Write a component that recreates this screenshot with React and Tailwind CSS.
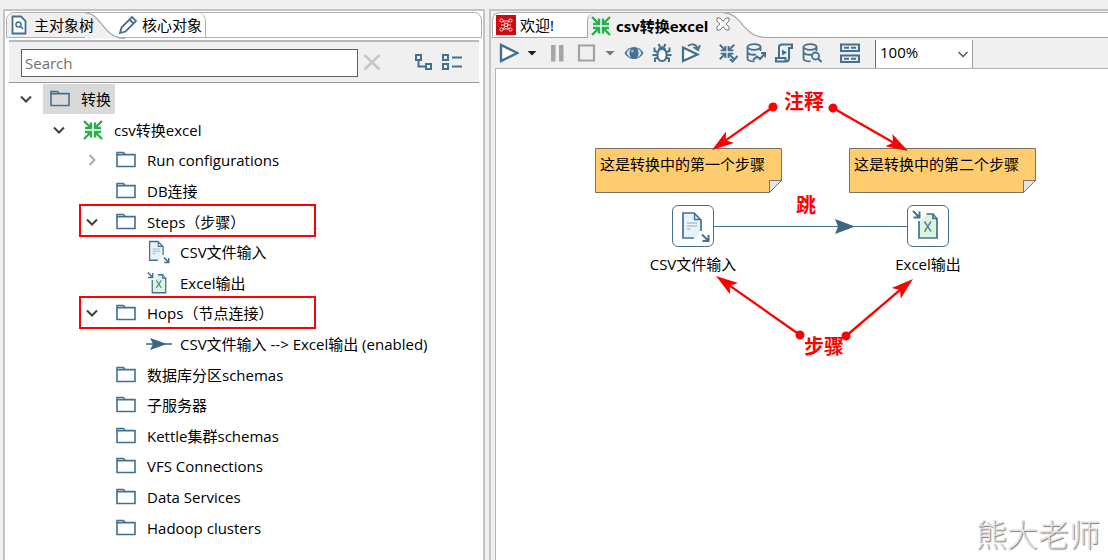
import React from "react";

const INK = "#44708f";

function Svg({ children, className = "size-5", box = "0 0 20 20" }) {
  return (
    <svg viewBox={box} className={`shrink-0 ${className}`} fill="none" aria-hidden="true">
      {children}
    </svg>
  );
}

const FolderIcon = () => (
  <Svg>
    <path d="M1 4.5V2.5H7.5L9 4.5" stroke={INK} strokeWidth="1.5" />
    <path d="M1 4.6H19V16.5H1Z" stroke={INK} strokeWidth="1.6" />
  </Svg>
);

const InwardArrows = ({ color = "#27b04c" }) => (
  <g stroke={color} strokeWidth="2.4">
    <path d="M1 1L8 8M8 2.500V8H2" />
    <path d="M19 1L12 8M12 2.500V8H18" />
    <path d="M1 19L8 12M8 17.500V12H2" />
    <path d="M19 19L12 12M12 17.500V12H18" />
  </g>
);

const TransIcon = () => (
  <Svg>
    <InwardArrows />
  </Svg>
);

const CsvShape = () => (
  <>
    <path d="M7 5H18L24 11V25L20 29H7Z" fill="#e8f2f9" />
    <path d="M18 30H7V5H18L25 12V23" stroke={INK} strokeWidth="1.700" />
    <path d="M18.500 5V11.500H25" stroke={INK} strokeWidth="1.400" />
    <path d="M11 15H21M11 18H21M11 21H14.500" stroke="#92abc0" strokeWidth="1.100" />
    <path d="M26 26.500L32 32.500M32.500 27V33H26.500" stroke={INK} strokeWidth="2" />
  </>
);

const ExcelShape = () => (
  <>
    <path d="M8 14L16 6H22L26 10V29H8Z" fill="#dcf3dc" />
    <path d="M8 13V30H26V10.500H22V6H15.500" stroke={INK} strokeWidth="1.700" />
    <path d="M22 6L26 10.500" stroke={INK} strokeWidth="1.200" />
    <path d="M13.500 13.500L20 23.500M20 13.500L13.500 23.500" stroke="#5d8299" strokeWidth="1.500" />
    <path d="M2 3L8 9M8.500 3.500V9.500H2.500" stroke={INK} strokeWidth="2" />
  </>
);

const CsvIcon = () => (
  <Svg box="4 3 31 32" className="size-6">
    <CsvShape />
  </Svg>
);
const ExcelIcon = () => (
  <Svg box="2 1 30 32" className="size-6">
    <ExcelShape />
  </Svg>
);
const HopIcon = () => (
  <Svg box="0 0 26 14" className="h-3.5 w-6.5">
    <path d="M0 7H26" stroke={INK} strokeWidth="1.6" />
    <path d="M4 1L21 7L4 13L7 7Z" fill="#3d6685" />
  </Svg>
);

const Chevron = ({ open }) => (
  <Svg className="size-3" box="0 0 12 12">
    {open ? (
      <path d="M1 3.500L6 8.500L11 3.500" stroke="#404040" strokeWidth="2" />
    ) : (
      <path d="M3.500 1L8.500 6L3.500 11" stroke="#a6a6a6" strokeWidth="1.800" />
    )}
  </Svg>
);

const TREE = [
  { level: 0, text: "转换", icon: FolderIcon, open: true, selected: true },
  { level: 1, text: "csv转换excel", icon: TransIcon, open: true },
  { level: 2, text: "Run configurations", icon: FolderIcon, open: false },
  { level: 2, text: "DB连接", icon: FolderIcon },
  { level: 2, text: "Steps（步骤）", icon: FolderIcon, open: true, marked: true },
  { level: 3, text: "CSV文件输入", icon: CsvIcon },
  { level: 3, text: "Excel输出", icon: ExcelIcon },
  { level: 2, text: "Hops（节点连接）", icon: FolderIcon, open: true, marked: true },
  { level: 3, text: "CSV文件输入 --> Excel输出 (enabled)", icon: HopIcon },
  { level: 2, text: "数据库分区schemas", icon: FolderIcon },
  { level: 2, text: "子服务器", icon: FolderIcon },
  { level: 2, text: "Kettle集群schemas", icon: FolderIcon },
  { level: 2, text: "VFS Connections", icon: FolderIcon },
  { level: 2, text: "Data Services", icon: FolderIcon },
  { level: 2, text: "Hadoop clusters", icon: FolderIcon },
];

const INDENT = ["pl-[7px]", "pl-[40px]", "pl-[73px]", "pl-[106px]"];

function TreeRow({ level, text, icon: Icon, open, selected, marked }) {
  return (
    <li
      role="treeitem"
      aria-level={level + 1}
      aria-expanded={open}
      aria-selected={!!selected}
      className={`relative flex items-center gap-[7px] ${INDENT[level]}`}
    >
      {open === undefined ? (
        <span className="w-5 shrink-0" />
      ) : (
        <button type="button" aria-label={`切换 ${text}`} className="flex w-5 shrink-0 justify-center">
          <Chevron open={open} />
        </button>
      )}
      <span
        className={`flex h-[30px] items-center gap-[11px] whitespace-nowrap pl-[7px] pr-1 ${
          selected ? "bg-[#d9d9d9]" : ""
        }`}
      >
        <span className="flex w-5 shrink-0 justify-center">
          <Icon />
        </span>
        {text}
      </span>
      {marked && (
        <span className="pointer-events-none absolute -top-0.5 bottom-0 left-[70px] w-[237px] border-2 border-[#fb0007]" />
      )}
    </li>
  );
}

function Explorer() {
  return (
    <section className="flex min-w-0 flex-col border-x-2 border-t-2 border-[#c3c3c8] bg-white px-px pt-px">
      <div role="tablist" className="flex h-[26px] shrink-0 rounded-t-lg border border-[#b0b0b0] bg-white">
        <button
          type="button"
          role="tab"
          aria-selected="true"
          className="relative flex w-[78px] items-center gap-[7px] whitespace-nowrap rounded-tl-lg bg-[#f0f0f0] pl-1"
        >
          <Svg className="h-[26px] w-10 absolute left-[78px] top-0" box="0 0 40 26">
            <path d="M0 0C17 0 17 25 40 25.500H0Z" fill="#f0f0f0" />
            <path d="M0 0C17 0 17 25 40 25.500" stroke="#a5a5a5" strokeWidth="1.200" />
          </Svg>
          <Svg className="relative h-5 w-4" box="0 0 16 20">
            <path d="M1.500 1.500H10L14.500 6V18.500H1.500Z" stroke={INK} strokeWidth="1.800" fill="#fff" />
            <circle cx="7.500" cy="9.500" r="2.500" stroke={INK} strokeWidth="1.500" />
            <path d="M9.500 11.500L12 14" stroke={INK} strokeWidth="1.600" />
          </Svg>
          <span className="relative">主对象树</span>
        </button>
        <button
          type="button"
          role="tab"
          aria-selected="false"
          className="relative ml-[33px] flex items-center gap-1 whitespace-nowrap rounded-tr-lg border-r border-[#b0b0b0] pr-[3px]"
        >
          <Svg>
            <path d="M2 18L3.500 12.500L14 2L18 6L7.500 16.500ZM11.500 4.500L15.500 8.500" stroke={INK} strokeWidth="1.800" />
          </Svg>
          核心对象
        </button>
      </div>

      <div className="mx-[3px] mt-0.5 flex min-h-0 flex-1 flex-col border-t-2 border-[#b9b9bd]">
        <div className="flex h-[41px] shrink-0 items-center border-b border-[#999] bg-[#f0f0f0] pl-3 pr-[17px]">
          <input
            type="text"
            placeholder="Search"
            aria-label="Search"
            className="mt-px h-7 min-w-0 flex-1 border border-[#5f5f5f] bg-white px-[3px] outline-none placeholder:text-[#707070]"
          />
          <button type="button" aria-label="清除" className="ml-1">
            <Svg>
              <path d="M2.500 3L17.500 17.500M17.500 3L2.500 17.500" stroke="#c6c6c6" strokeWidth="2.500" />
            </Svg>
          </button>
          <button type="button" aria-label="展开全部" className="ml-8">
            <Svg>
              <path d="M2 3H7V8H2ZM12 12H17V17H12ZM4.500 8V14.500H12" stroke={INK} strokeWidth="2" />
            </Svg>
          </button>
          <button type="button" aria-label="折叠全部" className="ml-2">
            <Svg>
              <path d="M1 3H6V8H1ZM1 12H6V17H1Z" stroke={INK} strokeWidth="2" />
              <path d="M10 5.500H20M10 14.500H20" stroke={INK} strokeWidth="1.800" />
            </Svg>
          </button>
        </div>
        <ul role="tree" className="grid flex-1 auto-rows-fr pb-[17px] pt-px">
          {TREE.map((row) => (
            <TreeRow key={row.text + row.level} {...row} />
          ))}
        </ul>
      </div>
    </section>
  );
}

function Tool({ label, children, className = "", small }) {
  return (
    <button type="button" aria-label={label} title={label} className={`shrink-0 ${className}`}>
      <Svg className={small ? "h-5 w-2.5" : "size-5"} box={small ? "0 0 10 20" : "0 0 20 20"}>
        {children}
      </Svg>
    </button>
  );
}

const DbBody = () => (
  <>
    <ellipse cx="8" cy="4" rx="6.500" ry="2.800" stroke={INK} strokeWidth="1.800" />
    <path d="M1.500 4V15.500C1.500 17.200 4 18.400 8.500 18.400M14.500 4V8M1.500 9.500C2.500 11.500 6 12 10 11.600" stroke={INK} strokeWidth="1.800" />
  </>
);

function Toolbar() {
  return (
    <div role="toolbar" className="flex h-[30px] shrink-0 items-center bg-[#f0f0f0] pl-[7px]">
      <Tool label="运行">
        <path d="M2 2V18L18.500 10Z" stroke={INK} strokeWidth="2.400" fill="#fff" />
      </Tool>
      <Tool label="运行选项" small className="ml-2">
        <path d="M0.500 8H9.500L5 12.500Z" fill="#222" />
      </Tool>
      <Tool label="暂停" className="ml-2.5">
        <path d="M4 2H8.500V18.500H4ZM12 2H16.500V18.500H12Z" fill="#a6a6a6" />
      </Tool>
      <Tool label="停止" className="ml-2.5">
        <path d="M2 2.500H17V17.500H2Z" stroke="#a2a2a2" strokeWidth="2.200" />
      </Tool>
      <Tool label="停止选项" small className="ml-2">
        <path d="M0.500 8H9.500L5 12.500Z" fill="#777" />
      </Tool>
      <Tool label="预览" className="ml-[9px]">
        <path d="M0.500 10C5 2 15 2 19.500 10C15 18 5 18 0.500 10Z" fill={INK} />
        <path d="M2.500 10C4 7 5.500 6 7 5.500C5 8 5 12 7 14.500C5.500 14 4 13 2.500 10ZM17.500 10C16 7 14.500 6 13 5.500C15 8 15 12 13 14.500C14.500 14 16 13 17.500 10Z" fill="#d6e3ea" />
        <circle cx="8.500" cy="8" r="1.500" fill="#9bb4c5" />
      </Tool>
      <Tool label="调试" className="ml-2">
        <path d="M10 6C6.500 6 5.500 8 5.500 12C5.500 16 7.500 18 10 18C12.500 18 14.500 16 14.500 12C14.500 8 13.500 6 10 6Z" stroke={INK} strokeWidth="2" fill="#fff" />
        <path d="M6 7C6.500 2 13.500 2 14 7Z" fill={INK} />
        <path d="M6.500 1L8 4M13.500 1L12 4M5.500 9L2.500 8V4.500M14.500 9L17.500 8V4.500M5.500 12H0.500M14.500 12H19.500M6 14.500L3 15.500V19M14 14.500L17 15.500V19" stroke={INK} strokeWidth="2" />
      </Tool>
      <Tool label="重放" className="ml-[9px]">
        <path d="M2 4.500V18L16.500 11.500Z" stroke={INK} strokeWidth="2.200" fill="#fff" />
        <path d="M7 3C10 0.500 15 0.500 16.500 5.500M12.500 4L17 7L19 2" stroke={INK} strokeWidth="1.900" />
      </Tool>
      <Tool label="验证" className="ml-[17px]">
        <g transform="translate(1 1) scale(0.800)">
          <InwardArrows color={INK} />
        </g>
        <path d="M12 16L14.500 18.500L19.500 13" stroke={INK} strokeWidth="2" />
      </Tool>
      <Tool label="影响分析" className="ml-2">
        <DbBody />
        <path d="M7 17L11 13.500L14 16L19 10.500M15 10H19.500V14.500" stroke={INK} strokeWidth="2" />
      </Tool>
      <Tool label="获取SQL" className="ml-2">
        <path d="M5 15V4C5 2 6 1.500 8 1.500H18V5H15V15C15 17.500 14 18.500 12 18.500H2V15H11.500V18" stroke={INK} strokeWidth="2" />
        <path d="M8 6.500L13 9.500L8 12.500Z" fill={INK} />
      </Tool>
      <Tool label="探索数据库" className="ml-2">
        <DbBody />
        <circle cx="13.500" cy="13" r="3.500" stroke={INK} strokeWidth="1.800" fill="#f0f0f0" />
        <path d="M16 15.500L19.500 19" stroke={INK} strokeWidth="2" />
      </Tool>
      <Tool label="显示结果" className="ml-[18px]">
        <path d="M1 1.500H19V8H1ZM1 12.500H19V19H1Z" stroke={INK} strokeWidth="2.200" />
        <path d="M4 4.800H9M11 4.800H16M4 15.800H9M11 15.800H16" stroke={INK} strokeWidth="2" />
      </Tool>
      <div className="relative ml-[15px] h-full w-[98px] pt-0.5">
        <select
          aria-label="缩放"
          defaultValue="100%"
          className="h-full w-full appearance-none border-x border-l-[#6b6b6b] border-r-[#a0a0a0] bg-white pb-1 pl-1 outline-none"
        >
          <option>100%</option>
          <option>50%</option>
        </select>
        <Svg className="pointer-events-none absolute right-1 top-2.5 size-3" box="0 0 12 12">
          <path d="M1.500 4L6 8.500L10.500 4" stroke="#555" strokeWidth="1.400" />
        </Svg>
      </div>
    </div>
  );
}

function Note({ children, className }) {
  return (
    <div className={`absolute h-[45px] w-[187px] ${className}`}>
      <Svg className="absolute inset-0 h-[45px] w-[187px]" box="0 0 187 45">
        <path d="M0.500 0.500H186.500V32.500L174.500 44.500H0.500Z" fill="#ffcc70" stroke="#7a7265" />
        <path d="M174.500 44.500V32.500H186.500Z" fill="#e4e4e4" stroke="#7a7265" />
      </Svg>
      <p className="relative whitespace-nowrap pl-[5px] pt-[5px] leading-[22px]">{children}</p>
    </div>
  );
}

function Step({ label, children, className }) {
  return (
    <div className={`absolute flex w-[120px] flex-col items-center gap-1.5 ${className}`}>
      <div className="flex size-[42px] items-center justify-center rounded-md border border-[#44708f] bg-white">
        {children}
      </div>
      <span className="whitespace-nowrap leading-[22px]">{label}</span>
    </div>
  );
}

function Pointer({ from, to }) {
  const angle = (Math.atan2(to[1] - from[1], to[0] - from[0]) * 180) / Math.PI;
  const length = Math.hypot(to[0] - from[0], to[1] - from[1]);
  return (
    <g transform={`translate(${from[0]} ${from[1]}) rotate(${angle})`}>
      <circle r="4.500" fill="#fe0000" />
      <path d={`M0 0H${length - 15}`} stroke="#fe0000" strokeWidth="2.300" />
      <path d={`M${length} 0L${length - 22} -7L${length - 17} 0L${length - 22} 7Z`} fill="#fe0000" />
    </g>
  );
}

function Canvas() {
  return (
    <div className="relative ml-[3px] min-h-[400px] flex-1 overflow-hidden border-l border-t border-[#b4b4b8] bg-white">
      <Note className="left-[99px] top-[79px]">这是转换中的第一个步骤</Note>
      <Note className="left-[353px] top-[79px]">这是转换中的第二个步骤</Note>
      <svg viewBox="0 0 560 320" className="absolute left-0 top-0 h-80 w-[560px]" fill="none" aria-hidden="true">
        <path d="M218 157.500H411" stroke={INK} strokeWidth="1" />
        <path d="M339 150L359 157.500L339 165L342 157.500Z" fill="#3d6685" />
        <Pointer from={[277, 38]} to={[216, 81]} />
        <Pointer from={[337, 39]} to={[412, 82]} />
        <Pointer from={[304, 266]} to={[220, 207]} />
        <Pointer from={[350, 267]} to={[417, 210]} />
      </svg>
      <Step label="CSV文件输入" className="left-[137px] top-[136px]">
        <svg viewBox="0 0 40 40" className="size-10" fill="none" aria-hidden="true">
          <g transform="translate(3 2)">
            <CsvShape />
          </g>
        </svg>
      </Step>
      <Step label="Excel输出" className="left-[372px] top-[136px]">
        <svg viewBox="0 0 40 40" className="size-10" fill="none" aria-hidden="true">
          <g transform="translate(3 2)">
            <ExcelShape />
          </g>
        </svg>
      </Step>
      <strong className="absolute left-[288px] top-[19px] text-[20px] leading-7 text-[#fe0000]">注释</strong>
      <strong className="absolute left-[300px] top-[123px] text-[20px] leading-7 text-[#fe0000]">跳</strong>
      <strong className="absolute left-[308px] top-[264px] text-[20px] leading-7 text-[#fe0000]">步骤</strong>
      <span className="absolute bottom-1.5 right-2 text-[31px] font-light leading-10 text-[#e2e2e2] [text-shadow:1px_1px_1px_#777]">
        熊大老师
      </span>
    </div>
  );
}

function Editor() {
  return (
    <section className="flex min-w-0 flex-col border-l-2 border-t-2 border-[#c3c3c8] bg-[#f0f0f0] pl-px pt-px">
      <div role="tablist" className="flex h-[26px] shrink-0 rounded-tl-lg border-l border-t border-[#b0b0b0] bg-white">
        <button
          type="button"
          role="tab"
          aria-selected="false"
          className="flex w-[94px] items-center gap-1 whitespace-nowrap rounded-tl-lg border-b border-[#a5a5a5] pl-[3px]"
        >
          <Svg>
            <path d="M0 0H20V20H0Z" fill="#cf0a10" />
            <path d="M7 6L13 14M13 6L7 14M7 6H13M7 14H13M5 10H15" stroke="#ffd7d7" strokeWidth="1" />
            <g fill="#cf0a10" stroke="#ffd7d7">
              <circle cx="5.500" cy="5.500" r="1.600" />
              <circle cx="14.500" cy="5.500" r="1.600" />
              <circle cx="5.500" cy="14.500" r="1.600" />
              <circle cx="14.500" cy="14.500" r="1.600" />
              <circle cx="10" cy="10" r="1.600" />
            </g>
          </Svg>
          欢迎!
        </button>
        <div className="flex w-[137px] shrink-0 items-center rounded-tl-lg border-l border-[#a5a5a5] bg-[#f0f0f0] pl-[3px]">
          <button type="button" role="tab" aria-selected="true" className="flex items-center gap-[5px] whitespace-nowrap font-bold">
            <TransIcon />
            csv转换excel
          </button>
        </div>
        <div className="relative w-[42px] shrink-0">
          <Svg className="h-[25px] w-[42px]" box="0 0 42 25">
            <path d="M0 0C18 0 18 24 42 24.500V25H0Z" fill="#f0f0f0" />
            <path d="M0 0C18 0 18 24 42 24.500" stroke="#a5a5a5" strokeWidth="1.200" />
          </Svg>
          <button type="button" aria-label="关闭" className="absolute -left-2 top-1">
            <Svg className="size-3.5" box="0 0 14 14">
              <path d="M1 1H4L7 4.500L10 1H13V4L10 7L13 10V13H10L7 9.500L4 13H1V10L4 7L1 4Z" stroke="#777" fill="#fff" />
            </Svg>
          </button>
        </div>
        <div className="flex-1 border-b border-[#a5a5a5]" />
      </div>
      <Toolbar />
      <Canvas />
    </section>
  );
}

export default function App() {
  return (
    <main className="grid min-h-screen grid-cols-[minmax(0,482fr)_minmax(0,619fr)] gap-1 bg-[#f0f0f0] pl-[3px] pt-[9px] font-['Open_Sans','Noto_Sans_CJK_SC',sans-serif] text-[15px] leading-5 text-black">
      <Explorer />
      <Editor />
    </main>
  );
}
